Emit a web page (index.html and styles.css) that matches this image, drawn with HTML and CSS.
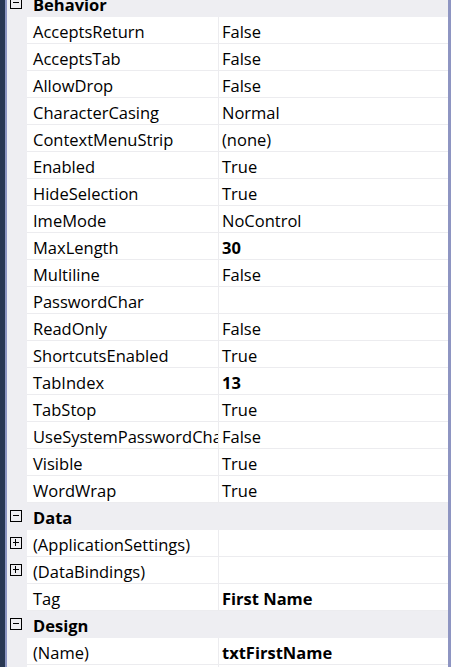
FILE: index.html
```html
<!DOCTYPE html>
<html>
<head>
<meta charset="utf-8">
<link rel="stylesheet" href="styles.css">
</head>
<body>
<div class="window">
  <div class="grid">
    <div class="row cat"><span class="gut"><span class="tog minus"></span></span><span class="label">Behavior</span></div>
    <div class="row"><span class="gut"></span><span class="name">AcceptsReturn</span><span class="val">False</span></div>
    <div class="row"><span class="gut"></span><span class="name">AcceptsTab</span><span class="val">False</span></div>
    <div class="row"><span class="gut"></span><span class="name">AllowDrop</span><span class="val">False</span></div>
    <div class="row"><span class="gut"></span><span class="name">CharacterCasing</span><span class="val">Normal</span></div>
    <div class="row"><span class="gut"></span><span class="name">ContextMenuStrip</span><span class="val">(none)</span></div>
    <div class="row"><span class="gut"></span><span class="name">Enabled</span><span class="val">True</span></div>
    <div class="row"><span class="gut"></span><span class="name">HideSelection</span><span class="val">True</span></div>
    <div class="row"><span class="gut"></span><span class="name">ImeMode</span><span class="val">NoControl</span></div>
    <div class="row"><span class="gut"></span><span class="name">MaxLength</span><span class="val b">30</span></div>
    <div class="row"><span class="gut"></span><span class="name">Multiline</span><span class="val">False</span></div>
    <div class="row"><span class="gut"></span><span class="name">PasswordChar</span><span class="val"></span></div>
    <div class="row"><span class="gut"></span><span class="name">ReadOnly</span><span class="val">False</span></div>
    <div class="row"><span class="gut"></span><span class="name">ShortcutsEnabled</span><span class="val">True</span></div>
    <div class="row"><span class="gut"></span><span class="name">TabIndex</span><span class="val b">13</span></div>
    <div class="row"><span class="gut"></span><span class="name">TabStop</span><span class="val">True</span></div>
    <div class="row"><span class="gut"></span><span class="name">UseSystemPasswordChar</span><span class="val">False</span></div>
    <div class="row"><span class="gut"></span><span class="name">Visible</span><span class="val">True</span></div>
    <div class="row"><span class="gut"></span><span class="name">WordWrap</span><span class="val">True</span></div>
    <div class="row cat"><span class="gut"><span class="tog minus"></span></span><span class="label">Data</span></div>
    <div class="row"><span class="gut"><span class="tog plus"></span></span><span class="name">(ApplicationSettings)</span><span class="val"></span></div>
    <div class="row"><span class="gut"><span class="tog plus"></span></span><span class="name">(DataBindings)</span><span class="val"></span></div>
    <div class="row"><span class="gut"></span><span class="name">Tag</span><span class="val b">First Name</span></div>
    <div class="row cat"><span class="gut"><span class="tog minus"></span></span><span class="label">Design</span></div>
    <div class="row"><span class="gut"></span><span class="name">(Name)</span><span class="val b">txtFirstName</span></div>
    <div class="row"><span class="gut"></span><span class="name">GenerateMember</span><span class="val">True</span></div>
  </div>
</div>
</body>
</html>
```

FILE: styles.css
```css
html, body {
  margin: 0;
  padding: 0;
  background: #ffffff;
}
body {
  height: 667px;
  overflow: hidden;
  font-family: "Open Sans", "Noto Sans", sans-serif;
  font-size: 16.5px;
  color: #000000;
}
.window {
  height: 667px;
  overflow: hidden;
  border-left: 5px solid #283752;
}
.grid {
  margin-top: -10px;
  border-left: 2px solid #8c95c1;
  border-right: 3px solid #8e95c2;
  background: #eeeef2;
}
.row {
  display: grid;
  grid-template-columns: 20px 191px 1fr;
  height: 27px;
}
.gut {
  background: #eeeef2;
  display: flex;
  align-items: center;
  padding-left: 3px;
  padding-bottom: 1px;
}
.name, .val {
  background: #ffffff;
  border-bottom: 1px solid #ececef;
  line-height: 29px;
  height: 26px;
  white-space: nowrap;
  overflow: hidden;
}
.name {
  padding-left: 6px;
}
.val {
  border-left: 1px solid #ececef;
  padding-left: 3px;
}
.b {
  font-weight: 700;
}
.cat .label {
  grid-column: 2 / 4;
  background: #eeeef2;
  padding-left: 6px;
  line-height: 29px;
  height: 27px;
  overflow: hidden;
  font-weight: 700;
}
.tog {
  width: 12px;
  height: 12px;
  box-sizing: border-box;
  border: 1px solid #000000;
  position: relative;
  display: block;
}
.tog::before {
  content: "";
  position: absolute;
  left: 2px;
  right: 2px;
  top: 4px;
  height: 1px;
  background: #000000;
}
.plus::after {
  content: "";
  position: absolute;
  top: 1px;
  bottom: 2px;
  left: 4px;
  width: 1px;
  background: #000000;
}
```
